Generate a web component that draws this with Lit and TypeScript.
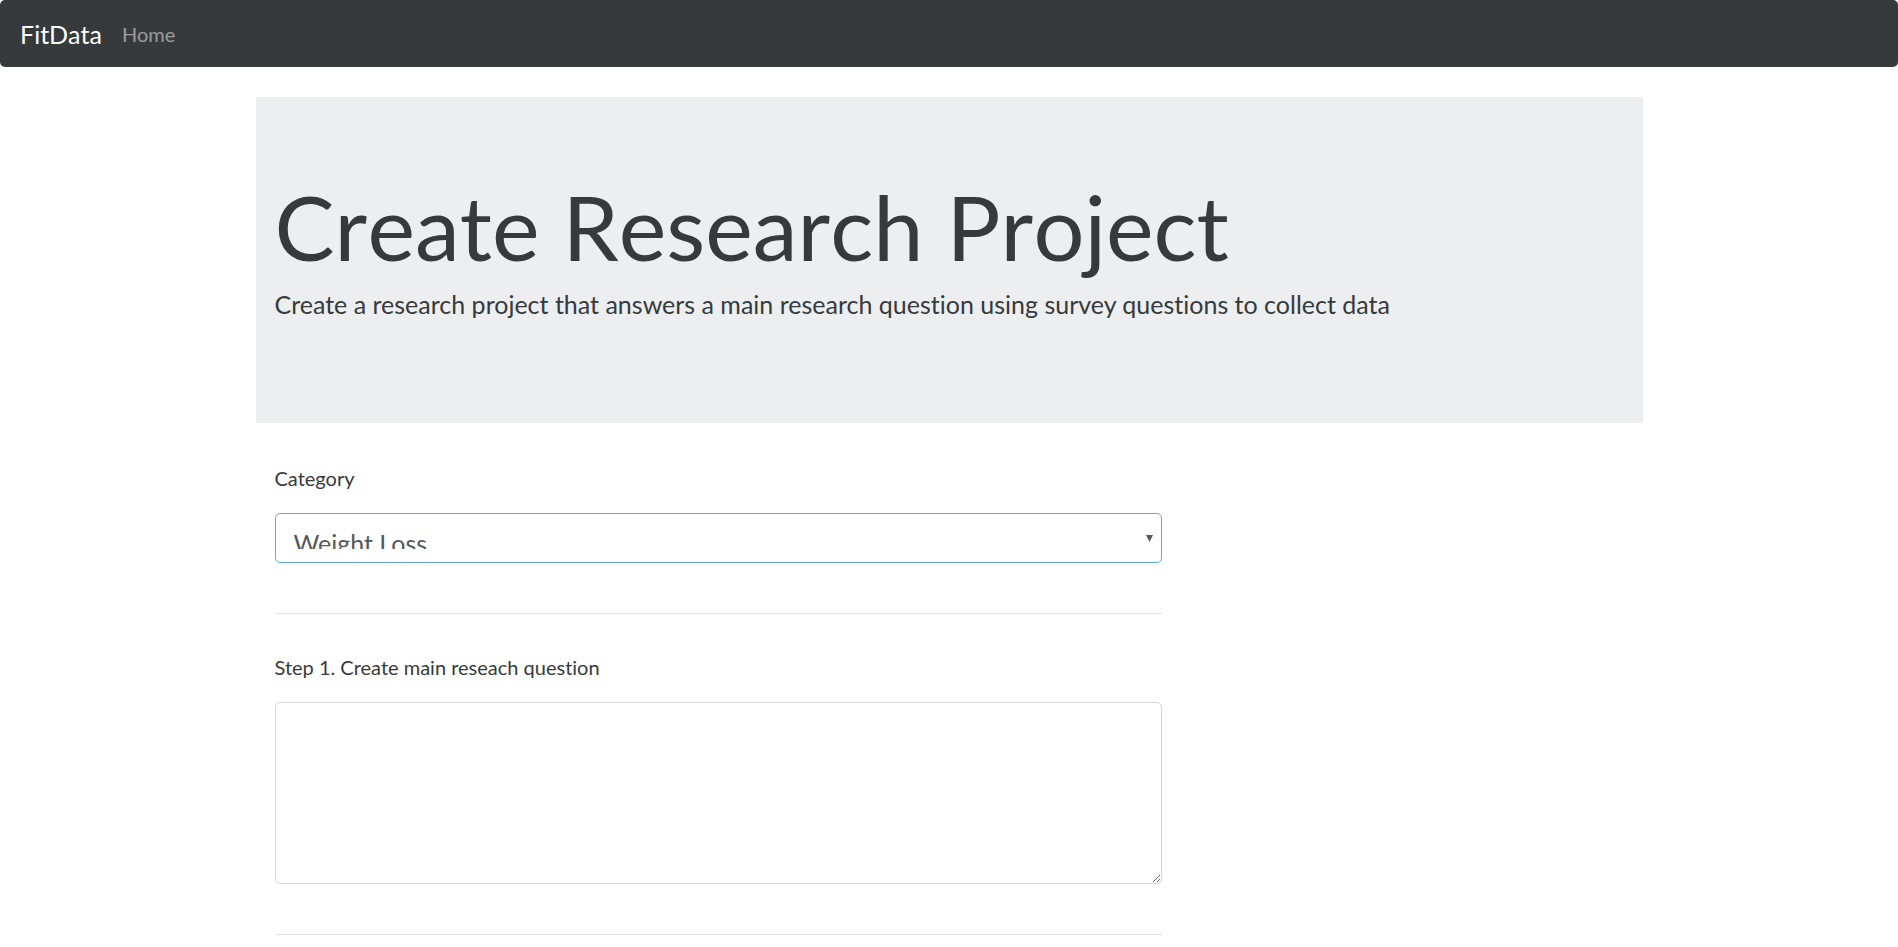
import { LitElement, html, css } from "lit";
import { customElement, state } from "lit/decorators.js";

@customElement("app-root")
export class AppRoot extends LitElement {
  static styles = css`
    :host {
      display: block;
      font-family: Lato, "Liberation Sans", sans-serif;
      font-size: 20px;
      line-height: 30px;
      font-variant-ligatures: none;
      color: #373a3c;
      background: #fff;
    }
    *,
    *::before,
    *::after {
      box-sizing: border-box;
    }
    .navbar {
      display: flex;
      align-items: center;
      gap: 20px;
      min-height: 67px;
      padding: 10px 20px;
      border-radius: 5px;
      background: #373a3c;
    }
    .brand {
      color: #fff;
      font-size: 25px;
      font-kerning: none;
      text-decoration: none;
    }
    .nav-link {
      color: rgba(255, 255, 255, 0.5);
      text-decoration: none;
    }
    .container {
      max-width: 1425px;
      margin: 30px auto 0;
      padding: 0 19px;
    }
    .jumbotron {
      padding: 80px 19px;
      background: #eceeef;
    }
    .title {
      margin: 0 0 10px;
      font-size: 90px;
      line-height: 99px;
      font-weight: 400;
      font-kerning: none;
    }
    .lead {
      margin: 0 0 20px;
      font-size: 25px;
      line-height: 37px;
    }
    .form {
      width: 66.6667%;
      padding: 0 18px 0 19px;
      margin-top: 40px;
    }
    .group {
      display: flex;
      flex-direction: column;
      gap: 20px;
    }
    .select-box {
      position: relative;
      display: flex;
    }
    .control {
      display: block;
      width: 100%;
      border: 1px solid #d6d6d6;
      border-radius: 5px;
      background: #fff;
      color: #55595c;
      font-family: inherit;
      font-size: 25px;
      outline: none;
    }
    .select {
      appearance: none;
      height: 50px;
      padding: 14px 18px 13px;
      border-color: #62a9e3;
    }
    .arrow {
      position: absolute;
      top: 22px;
      right: 9px;
      width: 7px;
      height: 7px;
      fill: #55595c;
      pointer-events: none;
    }
    .textarea {
      height: 182px;
      padding: 15px 18px;
      font-size: 20px;
      resize: vertical;
    }
    .rule {
      margin: 50px 0 38px;
      border: 0;
      border-top: 1px solid #e1e1e1;
    }
  `;

  @state() private category = "Weight Loss";

  private categories = ["Weight Loss", "Nutrition", "Strength", "Sleep"];

  private onCategory(e: Event) {
    this.category = (e.target as HTMLSelectElement).value;
  }

  render() {
    return html`
      <nav class="navbar">
        <a class="brand" href="#">FitData</a>
        <a class="nav-link" href="#">Home</a>
      </nav>
      <main class="container">
        <header class="jumbotron">
          <h1 class="title">Create Research Project</h1>
          <p class="lead">
            Create a research project that answers a main research question using survey questions to collect data
          </p>
        </header>
        <form class="form">
          <div class="group">
            <label for="category">Category</label>
            <div class="select-box">
              <select id="category" class="control select" @change=${this.onCategory}>
                ${this.categories.map(
                  (c) => html`<option value=${c} ?selected=${c === this.category}>${c}</option>`
                )}
              </select>
              <svg class="arrow" viewBox="0 0 7 7" aria-hidden="true"><path d="M0 0h7L3.5 7z" /></svg>
            </div>
          </div>
          <hr class="rule" />
          <div class="group">
            <label for="question">Step 1. Create main reseach question</label>
            <textarea id="question" class="control textarea"></textarea>
          </div>
          <hr class="rule" />
        </form>
      </main>
    `;
  }
}
